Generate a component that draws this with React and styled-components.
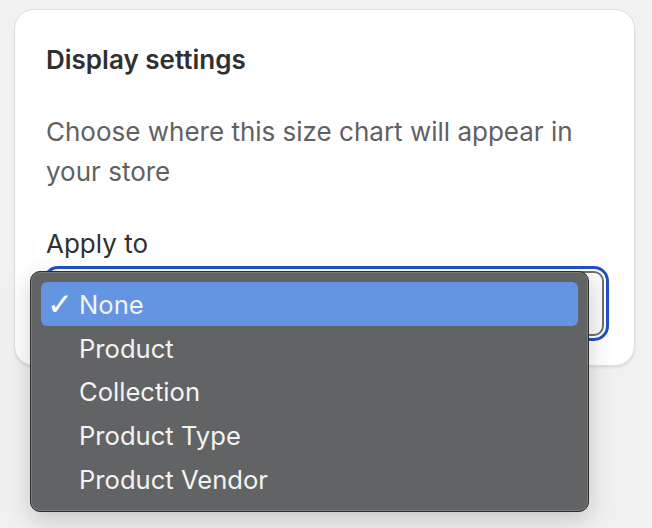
import React from "react";
import styled, { createGlobalStyle } from "styled-components";

const Global = createGlobalStyle`
  html, body { margin: 0; padding: 0; background: #f1f1f1; }
  body { font-family: Inter, "Noto Sans", sans-serif; -webkit-font-smoothing: antialiased; }
  * { box-sizing: border-box; }
`;

const Page = styled.div`
  position: relative;
  width: 652px;
  height: 528px;
  padding: 9px 17px 0 14px;
  overflow: hidden;
`;

const Card = styled.section`
  width: 621px;
  height: 357px;
  background: #ffffff;
  border: 1px solid #dedede;
  border-radius: 20px;
  box-shadow: 0 2px 2px rgba(0, 0, 0, 0.08);
  padding: 34px 31px 0 31px;
  display: flex;
  flex-direction: column;
`;

const Heading = styled.h2`
  margin: 0;
  font-size: 26px;
  line-height: 32px;
  font-weight: 600;
  color: #303030;
`;

const Description = styled.p`
  margin: 36px 0 0;
  font-size: 26px;
  line-height: 40px;
  color: #616161;
`;

const Label = styled.label`
  margin-top: 36px;
  font-size: 26px;
  line-height: 32px;
  color: #303030;
`;

const SelectBox = styled.div`
  margin-top: 11px;
  margin-left: 2px;
  width: 556px;
  height: 65px;
  border: 2px solid #6f6f6f;
  border-radius: 10px;
  background: #fafafa;
  outline: 3px solid #1f50c5;
  outline-offset: 2px;
`;

const Menu = styled.ul`
  position: absolute;
  left: 30px;
  top: 271px;
  width: 559px;
  height: 241px;
  margin: 0;
  padding: 10px 10px 10px 10px;
  list-style: none;
  background: #626364;
  border: 1px solid #2f2f2f;
  border-radius: 10px;
  box-shadow: inset 0 0 0 1px #7a7b7c, 0 8px 24px rgba(0, 0, 0, 0.18);
  display: flex;
  flex-direction: column;
`;

const Item = styled.li`
  position: relative;
  height: 44px;
  display: flex;
  align-items: center;
  padding-left: 38px;
  padding-top: 1px;
  border-radius: 6px;
  font-family: Inter, "Noto Sans", sans-serif;
  font-size: 25.6px;
  color: #f3f3f3;
  background: ${(p) => (p.$selected ? "#6495e2" : "transparent")};
`;

const Check = styled.span`
  position: absolute;
  left: 6px;
  top: 50%;
  transform: translateY(-48%);
  font-family: "DejaVu Sans", sans-serif;
  font-size: 31px;
  line-height: 1;
  font-weight: 700;
  color: #ffffff;
`;

const options = ["None", "Product", "Collection", "Product Type", "Product Vendor"];

export default function App() {
  return (
    <>
      <Global />
      <Page>
        <Card>
          <Heading>Display settings</Heading>
          <Description>Choose where this size chart will appear in your store</Description>
          <Label>Apply to</Label>
          <SelectBox />
        </Card>
        <Menu>
          {options.map((o, i) => (
            <Item key={o} $selected={i === 0}>
              {i === 0 && <Check>✓</Check>}
              {o}
            </Item>
          ))}
        </Menu>
      </Page>
    </>
  );
}
